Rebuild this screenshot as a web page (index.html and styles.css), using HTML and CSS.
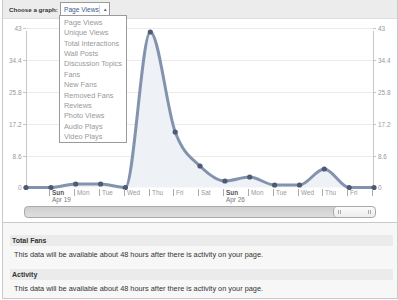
FILE: index.html
```html
<!DOCTYPE html>
<html lang="en">
<head>
    <meta charset="UTF-8">
    <title>Insights</title>
    <link rel="stylesheet" href="styles.css">
</head>
<body>
    <div class="panel">
        <div class="graph-bar">
            <span class="graph-label">Choose a graph:</span>
            <div class="select">
                <div class="select-btn">
                    <span class="select-value">Page Views</span>
                    <span class="select-arrow">&#9650;</span>
                </div>
                <ul class="select-menu">
                    <li>Page Views</li>
                    <li>Unique Views</li>
                    <li>Total Interactions</li>
                    <li>Wall Posts</li>
                    <li>Discussion Topics</li>
                    <li>Fans</li>
                    <li>New Fans</li>
                    <li>Removed Fans</li>
                    <li>Reviews</li>
                    <li>Photo Views</li>
                    <li>Audio Plays</li>
                    <li>Video Plays</li>
                </ul>
            </div>
        </div>

        <div class="chart">
            <svg class="chart-svg" width="393" height="186" viewBox="3 19 393 186">
                <!-- grid -->
                <g class="grid">
                    <line x1="26" y1="28.5" x2="373" y2="28.5"/>
                    <line x1="26" y1="60.5" x2="373" y2="60.5"/>
                    <line x1="26" y1="92.5" x2="373" y2="92.5"/>
                    <line x1="26" y1="124.5" x2="373" y2="124.5"/>
                    <line x1="26" y1="156.5" x2="373" y2="156.5"/>
                </g>
                <g class="axis">
                    <line x1="26.5" y1="31" x2="26.5" y2="188"/>
                    <line x1="373.5" y1="31" x2="373.5" y2="188"/>
                    <line x1="23" y1="28.5" x2="26" y2="28.5"/>
                    <line x1="23" y1="60.5" x2="26" y2="60.5"/>
                    <line x1="23" y1="92.5" x2="26" y2="92.5"/>
                    <line x1="23" y1="124.5" x2="26" y2="124.5"/>
                    <line x1="23" y1="156.5" x2="26" y2="156.5"/>
                    <line x1="23" y1="187.5" x2="26" y2="187.5"/>
                    <line x1="373" y1="28.5" x2="376" y2="28.5"/>
                    <line x1="373" y1="60.5" x2="376" y2="60.5"/>
                    <line x1="373" y1="92.5" x2="376" y2="92.5"/>
                    <line x1="373" y1="124.5" x2="376" y2="124.5"/>
                    <line x1="373" y1="156.5" x2="376" y2="156.5"/>
                    <line x1="373" y1="187.5" x2="376" y2="187.5"/>
                </g>
                <g class="y-labels left">
                    <text x="21.5" y="30.5">43</text>
                    <text x="21.5" y="62.5">34.4</text>
                    <text x="21.5" y="94.5">25.8</text>
                    <text x="21.5" y="126.5">17.2</text>
                    <text x="21.5" y="158.5">8.6</text>
                    <text x="21.5" y="189.8">0</text>
                </g>
                <g class="y-labels right">
                    <text x="378" y="30.5">43</text>
                    <text x="378" y="62.5">34.4</text>
                    <text x="378" y="94.5">25.8</text>
                    <text x="378" y="126.5">17.2</text>
                    <text x="378" y="158.5">8.6</text>
                    <text x="378" y="189.8">0</text>
                </g>

                <path class="area" d="M26,187.5 C34.3,187.5 42.6,187.5 50.9,187.5 C59.2,187.5 67.4,184 75.7,184 C84,184 92.3,184 100.6,184 C108.9,184 117.1,187.5 125.4,187.5 C133.7,187.5 142,32 150.3,32 C158.6,32 166.9,109.7 175.2,132 C183.5,154.3 191.7,157.8 200,166 C208.3,174.2 216.6,181 224.9,181 C233.2,181 241.4,177 249.7,177 C258,177 266.3,185 274.6,185 C282.9,185 291.2,185 299.5,185 C307.8,185 316,169 324.3,169 C332.6,169 340.9,187.5 349.2,187.5 C357.5,187.5 365.7,187.5 374,187.5 Z"/>
                <path class="line" d="M26,187.5 C34.3,187.5 42.6,187.5 50.9,187.5 C59.2,187.5 67.4,184 75.7,184 C84,184 92.3,184 100.6,184 C108.9,184 117.1,187.5 125.4,187.5 C133.7,187.5 142,32 150.3,32 C158.6,32 166.9,109.7 175.2,132 C183.5,154.3 191.7,157.8 200,166 C208.3,174.2 216.6,181 224.9,181 C233.2,181 241.4,177 249.7,177 C258,177 266.3,185 274.6,185 C282.9,185 291.2,185 299.5,185 C307.8,185 316,169 324.3,169 C332.6,169 340.9,187.5 349.2,187.5 C357.5,187.5 365.7,187.5 374,187.5"/>
                <g class="dots">
                    <circle cx="26" cy="187.5" r="2.6"/>
                    <circle cx="50.9" cy="187.5" r="2.6"/>
                    <circle cx="75.7" cy="184" r="2.6"/>
                    <circle cx="100.6" cy="184" r="2.6"/>
                    <circle cx="125.4" cy="187.5" r="2.6"/>
                    <circle cx="150.3" cy="32" r="2.6"/>
                    <circle cx="175.2" cy="132" r="2.6"/>
                    <circle cx="200" cy="166" r="2.6"/>
                    <circle cx="224.9" cy="181" r="2.6"/>
                    <circle cx="249.7" cy="177" r="2.6"/>
                    <circle cx="274.6" cy="185" r="2.6"/>
                    <circle cx="299.5" cy="185" r="2.6"/>
                    <circle cx="324.3" cy="169" r="2.6"/>
                    <circle cx="349.2" cy="187.5" r="2.6"/>
                    <circle cx="374" cy="187.5" r="2.6"/>
                </g>

                <g class="x-ticks">
                    <line x1="49.5" y1="189" x2="49.5" y2="196"/>
                    <line x1="74.5" y1="189" x2="74.5" y2="196"/>
                    <line x1="99.5" y1="189" x2="99.5" y2="196"/>
                    <line x1="124.5" y1="189" x2="124.5" y2="196"/>
                    <line x1="149.5" y1="189" x2="149.5" y2="196"/>
                    <line x1="173.5" y1="189" x2="173.5" y2="196"/>
                    <line x1="198.5" y1="189" x2="198.5" y2="196"/>
                    <line x1="223.5" y1="189" x2="223.5" y2="196"/>
                    <line x1="248.5" y1="189" x2="248.5" y2="196"/>
                    <line x1="273.5" y1="189" x2="273.5" y2="196"/>
                    <line x1="298.5" y1="189" x2="298.5" y2="196"/>
                    <line x1="322.5" y1="189" x2="322.5" y2="196"/>
                    <line x1="347.5" y1="189" x2="347.5" y2="196"/>
                    <line x1="372.5" y1="189" x2="372.5" y2="196"/>
                </g>
                <g class="x-labels">
                    <text class="week" x="52" y="195">Sun</text>
                    <text class="date" x="52" y="201.5">Apr 19</text>
                    <text x="77" y="195">Mon</text>
                    <text x="102" y="195">Tue</text>
                    <text x="127" y="195">Wed</text>
                    <text x="152" y="195">Thu</text>
                    <text x="176" y="195">Fri</text>
                    <text x="201" y="195">Sat</text>
                    <text class="week" x="226" y="195">Sun</text>
                    <text class="date" x="226" y="201.5">Apr 26</text>
                    <text x="251" y="195">Mon</text>
                    <text x="276" y="195">Tue</text>
                    <text x="301" y="195">Wed</text>
                    <text x="325" y="195">Thu</text>
                    <text x="350" y="195">Fri</text>
                </g>
            </svg>

            <div class="scrollbar">
                <div class="thumb">
                    <span class="grip"></span>
                    <span class="grip"></span>
                </div>
            </div>
        </div>

        <div class="stats">
            <div class="stat">
                <h3>Total Fans</h3>
                <p>This data will be available about 48 hours after there is activity on your page.</p>
            </div>
            <div class="stat">
                <h3>Activity</h3>
                <p>This data will be available about 48 hours after there is activity on your page.</p>
            </div>
        </div>
    </div>
</body>
</html>
```

FILE: styles.css
```css
* {
    margin: 0;
    padding: 0;
    box-sizing: border-box;
}

body {
    font-family: 'Liberation Sans', Arial, sans-serif;
    background: #fff;
    color: #333;
}

.panel {
    width: 396px;
    margin-left: 2px;
    border: 1px solid #c9c9c9;
    border-top: none;
}

/* graph chooser */
.graph-bar {
    position: relative;
    height: 19px;
    background: #ececec;
    border-bottom: 1px solid #dedede;
    display: flex;
    align-items: center;
    padding-left: 6px;
    z-index: 2;
}

.graph-label {
    font-size: 6.2px;
    font-weight: bold;
    color: #333;
    width: 51px;
}

.select {
    position: relative;
    align-self: flex-start;
    margin-top: 2px;
}

.select-btn {
    display: flex;
    align-items: center;
    height: 14px;
    width: 50px;
    background: #fff;
    border: 1px solid #9a9a9a;
    border-bottom: none;
    padding-left: 3px;
}

.select-value {
    font-size: 6.6px;
    color: #3b5998;
    width: 35px;
}

.select-arrow {
    font-size: 4.5px;
    color: #4a5670;
    border-left: 1px solid #d5d5d5;
    height: 9px;
    line-height: 9px;
    padding-left: 3px;
}

.select-menu {
    position: absolute;
    top: 13px;
    left: -1px;
    width: 68px;
    list-style: none;
    background: #fff;
    border: 1px solid #9a9a9a;
    padding: 2px 0 0 4px;
}

.select-menu li {
    font-size: 7.3px;
    line-height: 10.36px;
    color: #999;
    white-space: nowrap;
}

/* chart */
.chart {
    background: #fff;
    border-bottom: 1px solid #c9c9c9;
    padding-bottom: 4px;
}

.chart-svg {
    display: block;
}

.grid line {
    stroke: #ebebeb;
    stroke-width: 1;
}

.axis line {
    stroke: #c6c6c6;
    stroke-width: 1;
}

.chart-svg text {
    font-family: 'Liberation Sans', Arial, sans-serif;
    font-size: 6.4px;
    fill: #999;
}

.y-labels.left text {
    text-anchor: end;
}

.area {
    fill: #eef1f6;
}

.line {
    fill: none;
    stroke: #8493ad;
    stroke-width: 3;
    stroke-linecap: round;
    stroke-linejoin: round;
}

.dots circle {
    fill: #4c5a76;
}

.x-ticks line {
    stroke: #aaa;
    stroke-width: 1;
}

.x-labels text.week {
    font-weight: bold;
    fill: #555;
}

.x-labels text.date {
    fill: #777;
}

.scrollbar {
    display: flex;
    justify-content: flex-end;
    width: 352px;
    height: 12px;
    margin: 1px 0 0 21px;
    background: linear-gradient(#cfcfcf, #dedede);
    border: 1px solid #a9a9a9;
    border-radius: 4px;
}

.thumb {
    display: flex;
    align-items: center;
    justify-content: space-between;
    width: 42px;
    height: 100%;
    padding: 0 4px;
    background: linear-gradient(#fafafa, #ededed);
    border-left: 1px solid #a9a9a9;
    border-radius: 4px;
}

.grip {
    width: 3px;
    height: 4px;
    border-left: 1px solid #aaa;
    border-right: 1px solid #aaa;
}

/* stats */
.stats {
    background: #f7f7f7;
    padding: 12px 4px 2px 7px;
}

.stat h3 {
    font-size: 7px;
    font-weight: bold;
    color: #333;
    background: #ebebeb;
    height: 11px;
    line-height: 11px;
    padding-left: 2px;
}

.stat p {
    font-size: 7.35px;
    color: #333;
    line-height: 10px;
    margin: 4px 0 9px 4px;
}

.stat:last-child p {
    margin-bottom: 2px;
}
```
